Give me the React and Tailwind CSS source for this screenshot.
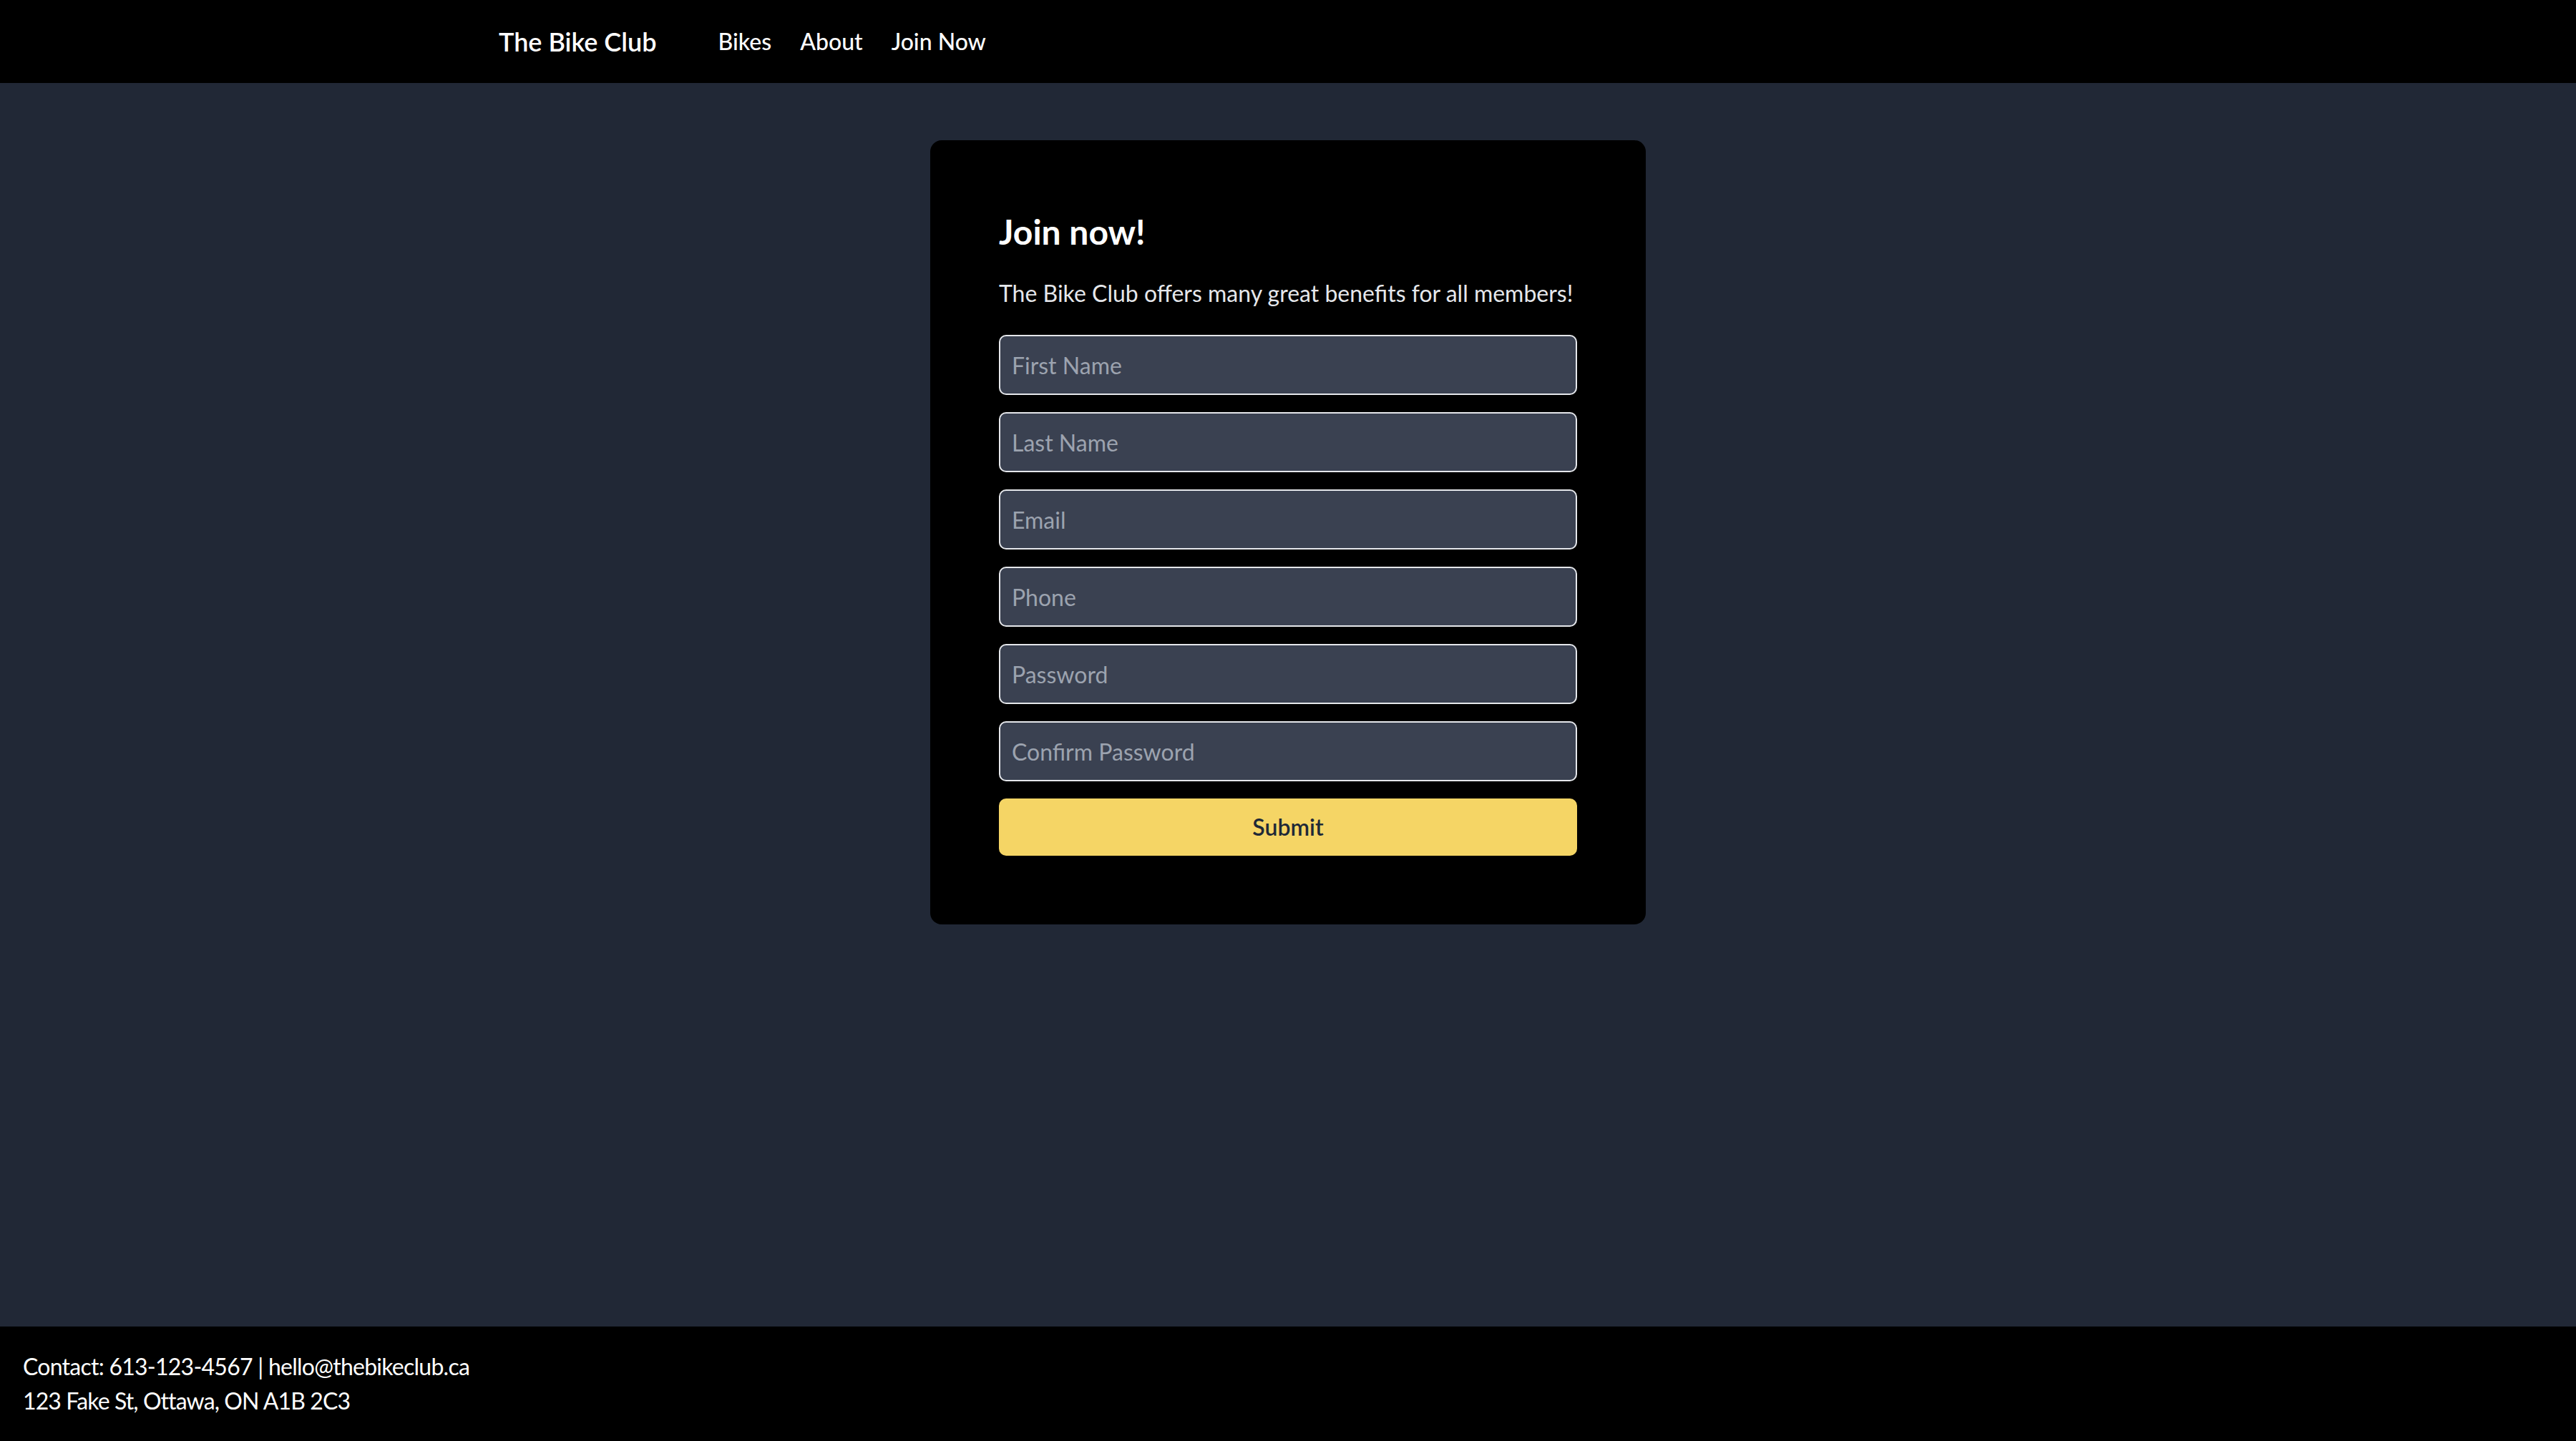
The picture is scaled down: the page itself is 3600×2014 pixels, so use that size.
import React, { useState } from "react";

const FIELDS = [
  { name: "firstName", type: "text", placeholder: "First Name" },
  { name: "lastName", type: "text", placeholder: "Last Name" },
  { name: "email", type: "email", placeholder: "Email" },
  { name: "phone", type: "tel", placeholder: "Phone" },
  { name: "password", type: "password", placeholder: "Password" },
  { name: "confirmPassword", type: "password", placeholder: "Confirm Password" },
];

export default function App() {
  const [form, setForm] = useState({
    firstName: "",
    lastName: "",
    email: "",
    phone: "",
    password: "",
    confirmPassword: "",
  });

  const handleChange = (e) => {
    setForm({ ...form, [e.target.name]: e.target.value });
  };

  const handleSubmit = (e) => {
    e.preventDefault();
  };

  return (
    <div className="min-h-screen flex flex-col bg-[#212836] font-['Lato',sans-serif] text-white">
      {/* Header */}
      <header className="h-[116px] bg-black flex items-center pl-[697px]">
        <a href="#" className="text-[36px] font-semibold mr-[86px]">
          The Bike Club
        </a>
        <nav className="flex gap-[40px] text-[32px] font-medium">
          <a href="#">Bikes</a>
          <a href="#">About</a>
          <a href="#">Join Now</a>
        </nav>
      </header>

      {/* Join form */}
      <main className="flex-1 pt-[80px]">
        <div className="w-[1000px] mx-auto bg-black rounded-[16px] p-[96px]">
          <h2 className="text-[48px] leading-[64px] font-bold mb-[30px]">Join now!</h2>
          <p className="text-[32px] leading-[48px] text-gray-200 mb-[34px]">
            The Bike Club offers many great benefits for all members!
          </p>

          <form className="flex flex-col gap-[24px]" onSubmit={handleSubmit}>
            {FIELDS.map((f) => (
              <input
                key={f.name}
                name={f.name}
                type={f.type}
                value={form[f.name]}
                onChange={handleChange}
                placeholder={f.placeholder}
                className="h-[84px] w-full px-[16px] rounded-[10px] border-2 border-gray-200 bg-[#3a4151] text-[32px] text-white placeholder:text-[#9ca3af] outline-none"
              />
            ))}
            <button
              type="submit"
              className="h-[80px] w-full rounded-[10px] bg-[#f5d565] text-[#1f2937] text-[32px] font-semibold"
            >
              Submit
            </button>
          </form>
        </div>
      </main>

      {/* Footer */}
      <footer className="bg-black p-[32px] text-[32px] leading-[48px]">
        <p className="tracking-[-0.75px]">Contact: 613-123-4567 | hello@thebikeclub.ca</p>
        <p className="tracking-[-0.9px]">123 Fake St, Ottawa, ON A1B 2C3</p>
      </footer>
    </div>
  );
}
